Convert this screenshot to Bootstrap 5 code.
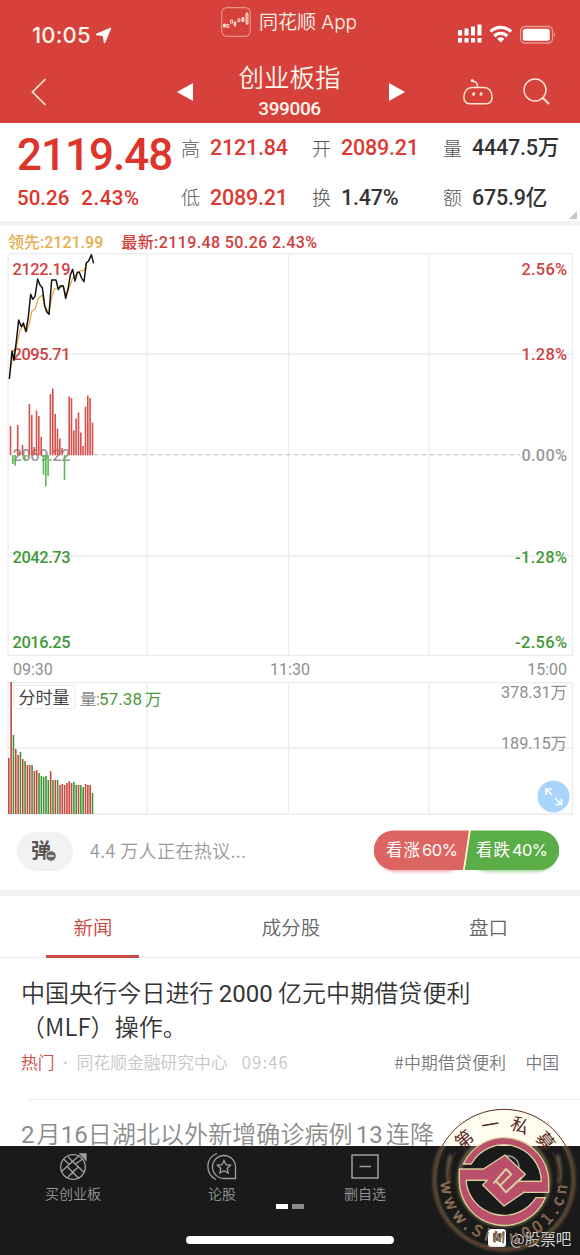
<!DOCTYPE html>
<html lang="zh-CN">
<head>
  <meta charset="UTF-8">
  <meta name="viewport" content="width=device-width, initial-scale=1.0">
  <title>创业板指 399006</title>
  <link href="https://cdn.jsdelivr.net/npm/bootstrap@5.3.3/dist/css/bootstrap.min.css" rel="stylesheet">
  <style>
    :root {
      --rojo: #d6423b;
      --num: Roboto, "Noto Sans CJK SC", sans-serif;
    }
    body {
      width: 580px;
      height: 1255px;
      overflow: hidden;
      background: #fff;
      font-family: var(--num);
      color: #333;
    }
    svg { display: block; flex: none; }
    .num { font-family: var(--num); font-weight: 500; }

    /* header */
    .top-area { height: 123px; background: var(--rojo); color: #fff5ea; }
    .status-row { height: 60px; padding: 7px 24px 0 32px; }
    .clock { font: 500 22px/30px Inter, sans-serif; width: 189px; padding-top: 13px; letter-spacing: .2px; }
    .app-name { font: 350 19px/30px Inter, "Noto Sans CJK SC", sans-serif; padding-top: 1px; }
    .title-row { height: 63px; grid-template-columns: 31px 146px 16px 196px 74px 60px 1fr; }
    .title-block { padding-right: 3px; margin-top: -1px; }
    .title-name { font: 350 25.5px/34px "Noto Sans CJK SC", sans-serif; }
    .title-code { font-size: 19px; line-height: 24px; letter-spacing: -.4px; margin-top: 4px; }

    /* quote */
    .quote { height: 98px; padding-left: 17px; }
    .price-col { width: 164px; color: #dd352a; }
    .price-big { font-size: 44px; line-height: 64px; letter-spacing: -1px; }
    .price-sub { font-size: 20.5px; line-height: 22px; gap: 12px; }
    .price-sub span + span { letter-spacing: .5px; }
    .stats { grid-template-columns: 131px 131px 1fr; grid-template-rows: 50px 49px; }
    .stats span { font-family: "Noto Sans CJK SC", sans-serif; font-size: 19px; font-weight: 300; color: #555; width: 29px; }
    .stats b { font-weight: 500; font-size: 21.5px; letter-spacing: -.2px; white-space: nowrap; padding-top: 1px; }
    .subida { color: #dd3a33; }
    .corner { right: 3px; top: 211px; border: 4px solid; border-color: transparent #c4c4c4 #c4c4c4 transparent; }
    .band { height: 5px; background: #f3f3f3; }

    /* charts */
    .legend-row { height: 27px; padding: 4px 0 0 8px; font-size: 16px; gap: 18px; line-height: 26px; font-weight: 500; }
    .grid-line { stroke: #ececec; stroke-width: 1.3; fill: none; }
    .time-row { height: 26px; padding: 2px 13px 0; font-size: 16px; font-weight: 400; color: #8f8f8f; }
    .chart text { font: 500 16.4px Roboto, "Noto Sans CJK SC", sans-serif; }
    .expand { right: 10px; bottom: 2px; }

    /* comments */
    .talk-row { height: 75px; padding: 0 21px 3px 17px; }
    .danmu { width: 56px; height: 39px; border-radius: 20px; background: #f2f2f2; font: 700 20px/36px "Noto Sans CJK SC", sans-serif; padding-left: 14px; color: #555; }
    .danmu svg { left: 28px; top: 18px; }
    .talk-text { font: 350 18px/26px "Noto Sans CJK SC", sans-serif; color: #999; margin: -2px 0 0 17px; letter-spacing: .4px; }

    /* tabs */
    .tab-row { height: 62px; grid-template-columns: 186px 210px 185px; border-bottom: 1px solid #e8e8e8; font: 350 19.5px/62px "Noto Sans CJK SC", sans-serif; color: #666; }
    .tab-on { color: #c9453f; }
    .tab-on::after { content: ""; position: absolute; left: 46px; width: 93px; height: 3px; bottom: 0; background: #c74c46; }

    /* news */
    .news { height: 188px; overflow: hidden; }
    .news-title { font: 350 24px/34px "Noto Sans CJK SC", sans-serif; color: #333; padding: 17px 21px 0; letter-spacing: .08px; }
    .news-title i { font: 400 24px/30px Roboto, sans-serif; margin: 0 5px; }
    .news-meta { padding: 6px 21px 0; font: 350 16.8px/26px "Noto Sans CJK SC", sans-serif; color: #c6c6c6; }
    .news-dot { width: 22px; text-align: center; font-family: Roboto, sans-serif; font-weight: 700; }
    .news-line { margin: 24px 0 0 27px; border-top: 1px solid #eee; }
    .news-old { color: #8c8c8c; padding-top: 16px; }

    /* footer */
    .foot { height: 109px; background: #1a1a1a; color: #979797; }
    .foot-items { height: 58px; padding-top: 5px; grid-template-columns: 146px 152px 134px 148px; font: 350 14px/22px "Noto Sans CJK SC", sans-serif; }
    .foot-items svg { fill: none; stroke: #a0a0a0; stroke-width: 1.3; margin-bottom: 1px; }
    .pager { gap: 4px; padding-left: 276px; }
    .pager span { width: 12px; height: 5px; background: #8b8b8b; }
    .home-bar { width: 208px; height: 8px; border-radius: 4px; background: #fff; margin: 27px 0 0 186px; }
    .seal { left: 430px; top: 1105px; }
    .seal text { font-family: "Noto Sans CJK SC", sans-serif; }
    .source { left: 488px; top: 1228px; font: 400 15.5px/20px "Noto Sans CJK SC", sans-serif; color: #d4d4d4; gap: 4px; }
    .source-logo { width: 18px; height: 18px; border-radius: 3px; background: #fff; color: #333; font-size: 11px; line-height: 17px; font-weight: 700; }
  </style>
</head>
<body>
  <!-- header -->
  <header class="top-area">
    <div class="status-row d-flex align-items-start">
      <div class="clock d-flex align-items-center gap-1">10:05
        <svg width="17" height="17" viewBox="0 0 17 17"><path d="M1.500 7.500L15.500 1.500L9.500 15.500L8.500 8.500Z" fill="#fff" stroke="#fff" stroke-width="1.500" stroke-linejoin="round"/></svg>
      </div>
      <svg width="30" height="30" viewBox="0 0 30 30" fill="none" stroke="#ffdccb">
        <rect x=".7" y=".7" width="28.6" height="28.6" rx="5" stroke="#ef9085" stroke-width="1.2"/>
        <path d="M2.500 17h1.800v3H2.500zM13 15.500h1.800v3H13zM21 10.500h1.800v4H21z" fill="#ffeadf"/>
        <path d="M5.800 17.500h2v3h-2zM9.500 13h2v3h-2zM17 12h2v2.500h-2zM25 6.500h2v10h-2zM14 14v6M26 5v13"/>
      </svg>
      <div class="app-name ms-2">同花顺 App</div>
      <div class="d-flex align-items-center ms-auto mt-2 pt-1">
        <svg width="98" height="28" viewBox="0 0 98 28" fill="#fff">
          <path d="M0 11h4v5.500H0zM6.500 9.500h4v7h-4zM13 7.500h4v9h-4zM19.500 5.500h4v11h-4zM0 19h4v4.500H0zM6.500 19h4v4.500h-4zM13 19h4v4.500h-4zM19.500 19h4v4.500h-4z"/>
          <g fill="none" stroke="#fff" stroke-width="3.200"><path d="M32.500 12.700a14.500 14.500 0 0 1 20.500 0"/><path d="M36.300 17.100a9 9 0 0 1 12.900 0"/></g>
          <path d="M42.750 23.500l-3.600-3.700a5.200 5.200 0 0 1 7.200 0z"/>
          <rect x="62.600" y="7.500" width="32" height="16.500" rx="4.500" fill="none" stroke="#eb9a8e" stroke-width="1.300"/>
          <rect x="64.800" y="9.700" width="27" height="12" rx="2.500"/>
          <path d="M96 13.500q2.500 2 0 4.500z" fill="#eb9a8e"/>
        </svg>
      </div>
    </div>
    <div class="title-row d-grid align-items-center">
      <span></span>
      <svg width="16" height="28" viewBox="0 0 16 28" fill="none" stroke="#ffe6d6" stroke-width="1.700"><path d="M14.500 1L1.500 14l13 13"/></svg>
      <svg width="16" height="18" viewBox="0 0 16 18"><path d="M0 9L16 0v18z" fill="#fff"/></svg>
      <div class="title-block text-center align-self-start">
        <div class="title-name">创业板指</div>
        <div class="title-code num">399006</div>
      </div>
      <svg width="16" height="18" viewBox="0 0 16 18"><path d="M16 9L0 0v18z" fill="#fff"/></svg>
      <svg width="30" height="27" viewBox="0 0 30 27" fill="none" stroke="#ffe6d6" stroke-width="1.500">
        <path d="M9 9.500h12c4.500 0 7.500 3.500 8 8.500.4 4.500-1.500 7.700-5.500 7.700h-17c-4 0-5.900-3.200-5.500-7.700C1.500 13 4.500 9.500 9 9.500zM14.500 9.500c.3-4-1.500-6-5-6.500"/>
        <circle cx="9.300" cy="2.600" r="1.600" fill="#ffe6d6" stroke="none"/>
        <path d="M11.300 14.500l-1.300 3M18.700 14.500l-1.300 3" stroke-width="2.600"/>
      </svg>
      <svg width="27" height="27" viewBox="0 0 27 27" fill="none" stroke="#ffe6d6" stroke-width="1.400"><circle cx="12" cy="12" r="11"/><path d="M19.500 19.500l6.500 6.500" stroke-width="2"/></svg>
    </div>
  </header>

  <!-- quote -->
  <section class="quote d-flex">
    <div class="price-col num">
      <div class="price-big">2119.48</div>
      <div class="price-sub d-flex"><span>50.26</span><span>2.43%</span></div>
    </div>
    <div class="stats d-grid flex-grow-1 align-items-center">
      <div class="d-flex align-items-center"><span>高</span><b class="subida">2121.84</b></div>
      <div class="d-flex align-items-center"><span>开</span><b class="subida">2089.21</b></div>
      <div class="d-flex align-items-center"><span>量</span><b>4447.5万</b></div>
      <div class="d-flex align-items-center"><span>低</span><b class="subida">2089.21</b></div>
      <div class="d-flex align-items-center"><span>换</span><b>1.47%</b></div>
      <div class="d-flex align-items-center"><span>额</span><b>675.9亿</b></div>
    </div>
    <div class="corner position-absolute"></div>
  </section>
  <div class="band"></div>

  <!-- charts -->
  <div class="legend-row d-flex">
    <span style="color:#e5ad4c">领先:2121.99</span>
    <span style="color:#d23c3a;letter-spacing:.4px">最新:2119.48 50.26 2.43%</span>
  </div>
  <svg class="chart" width="580" height="403" viewBox="0 253 580 403">
    <path class="grid-line" d="M8 253.700H572.500V655.500H8zM8 354H572M8 556H572M147 253V656M288.500 253V656M429 253V656"/>
    <path d="M94 454.700H520" stroke="#c4c4c4" stroke-width="1.200" stroke-dasharray="4.500 3.500"/>
    <g id="price-labels"></g>
    <g id="flow-bars"></g>
    <g fill="none" transform="translate(0 245) scale(.33333)" stroke-linejoin="round">
      <path stroke="#e6a23c" stroke-width="3.600" d="M28 400L36 345L48 312L60 255L70 242L80 258L88 235L96 198L105 192L115 160L127 150L133 180L147 205L155 158L163 133L175 127L190 125L199 152L208 126L218 100L228 88L240 78L252 76L260 54L274 34"/>
      <path stroke="#111" stroke-width="4.400" d="M28 402L36 318L42 346L50 280L56 225L64 245L70 234L78 260L85 215L92 148L98 163L105 154L113 102L120 120L127 128L134 182L140 200L147 208L155 105L168 105L175 134L182 122L190 123L197 160L204 132L211 90L218 73L225 108L232 82L238 82L245 100L252 110L259 54L266 48L274 29L281 55"/>
    </g>
  </svg>
  <div class="time-row d-flex justify-content-between align-items-center"><span>09:30</span><span>11:30</span><span>15:00</span></div>
  <div class="position-relative">
    <svg class="chart" width="580" height="133" viewBox="0 682 580 133">
      <path class="grid-line" d="M8 682.500H572.500V814H8zM8 748H572M147 682V814M288.500 682V814M429 682V814"/>
      <g id="volume-bars"></g>
      <rect x="13.500" y="685.500" width="61.500" height="23" rx="2" fill="#fff" stroke="#ebebeb"/>
      <text x="18.500" y="704" textLength="51" style="font-weight:400;font-size:17px" fill="#444">分时量</text>
      <text x="80" y="705" textLength="20" style="font-weight:400" fill="#888">量:</text>
      <text x="99" y="705" textLength="43" style="font-weight:400;font-size:17px" fill="#4a9a3c">57.38</text>
      <text x="145" y="705" style="font-weight:400" fill="#4a9a3c">万</text>
      <text x="501" y="698" textLength="66" style="font-weight:400" fill="#8f8f8f">378.31万</text>
      <text x="501" y="749" textLength="66" style="font-weight:400" fill="#8f8f8f">189.15万</text>
    </svg>
    <svg class="expand position-absolute" width="33" height="33" viewBox="0 0 33 33">
      <circle cx="16.500" cy="16.500" r="16" fill="#a9d4fb"/>
      <path d="M9 15V9h6M9 9l6 6M18 18l6 6M18.500 24.500h6v-6" fill="none" stroke="#fff" stroke-width="1.700"/>
    </svg>
  </div>

  <!-- comments -->
  <div class="talk-row d-flex align-items-center">
    <div class="danmu position-relative">弹
      <svg class="position-absolute" width="12" height="12" viewBox="0 0 12 12"><circle cx="6" cy="6" r="5.300" fill="#666" stroke="#f2f2f2"/><path d="M3.200 6h5.600" stroke="#fff" stroke-width="1.400"/></svg>
    </div>
    <div class="talk-text">4.4 万人正在热议...</div>
    <svg class="ms-auto mt-1" width="185" height="46" viewBox="0 0 185 46">
      <defs><filter id="soft" x="-5%" y="-10%" width="110%" height="140%"><feGaussianBlur stdDeviation="1.500"/></filter></defs>
      <rect x="3" y="4" width="88" height="38" rx="19" fill="#dc6562" opacity=".5" filter="url(#soft)"/>
      <rect x="94" y="4" width="88" height="38" rx="19" fill="#59ab47" opacity=".5" filter="url(#soft)"/>
      <path d="M19.500 .5H95L89 40H19.500A19.700 19.700 0 0 1 19.500 .5z" fill="#dc6562"/>
      <path d="M96.500 .5H165.500A19.700 19.700 0 0 1 165.500 40H90.500z" fill="#5bad48"/>
      <path d="M96 .5L90 40" stroke="#fff3d4" stroke-width="1.300"/>
      <g fill="#fff" style="font:400 16.500px Inter,'Noto Sans CJK SC',sans-serif">
        <text x="12" y="26" textLength="34">看涨</text><text x="48" y="26" textLength="36">60%</text>
        <text x="102" y="26" textLength="34">看跌</text><text x="138" y="26" textLength="36">40%</text>
      </g>
    </svg>
  </div>
  <div class="band" style="height:6px"></div>

  <!-- tabs -->
  <nav class="tab-row d-grid text-center">
    <div class="tab-on position-relative">新闻</div>
    <div>成分股</div>
    <div>盘口</div>
  </nav>

  <!-- news -->
  <main class="news">
    <div class="news-title">中国央行今日进行<i>2000</i>亿元中期借贷便利<br>（MLF）操作。</div>
    <div class="news-meta d-flex">
      <span style="color:#cf4a44">热门</span><span class="news-dot">·</span><span>同花顺金融研究中心</span>
      <span style="margin-left:14px;letter-spacing:1.2px">09:46</span>
      <span class="ms-auto" style="color:#777;letter-spacing:.3px">#中期借贷便利</span>
      <span style="color:#777;margin-left:19px">中国</span>
    </div>
    <div class="news-line"></div>
    <div class="news-title news-old text-nowrap"><i style="margin:0 2px 0 0">2</i>月<i class="mx-0">16</i><span>日湖北以外新增确诊病例</span><i style="margin:0 3px">13</i>连降</div>
  </main>

  <!-- footer -->
  <footer class="foot">
    <div class="foot-items d-grid">
      <div class="d-flex flex-column align-items-center">
        <svg width="30" height="30" viewBox="0 0 30 30">
          <circle cx="15" cy="16" r="12.300"/>
          <path d="M14.500 10.500l-5.500 5 5.500 5.500 6-5zM6 8.500l5.500 5M14.500 10.500l7-6M20.500 16l5.500 5.500M9 15.500l-5.500 5M14.500 21l6 6M17.500 18.500l-8 8M17.500 13l7-5M14.500 10.500l-4.500-5"/>
          <path d="M22 3h6v6z" fill="#a0a0a0"/>
        </svg>
        <span>买创业板</span>
      </div>
      <div class="d-flex flex-column align-items-center">
        <svg width="30" height="30" viewBox="0 0 30 30">
          <path d="M17 4.500a11.500 11.500 0 1 0 0 23h11.500V16A11.500 11.500 0 0 0 17 4.500zM10 2.500C-2 7-2 23 9 28.500"/>
          <path d="M17 9.500l2 4.200 4.600.6-3.400 3.200.9 4.600-4.100-2.300-4.100 2.300.9-4.600-3.400-3.200 4.600-.6z"/>
        </svg>
        <span>论股</span>
      </div>
      <div class="d-flex flex-column align-items-center">
        <svg width="30" height="30" viewBox="0 0 30 30"><path d="M2 4h26v23H2zM9.500 15.500h11.500" stroke-width="1.500"/></svg>
        <span>删自选</span>
      </div>
      <div class="d-flex flex-column align-items-center">
        <svg width="30" height="46" viewBox="0 0 30 46"><circle cx="17" cy="16" r="11"/><path d="M15 42h6"/></svg>
      </div>
    </div>
    <div class="pager d-flex"><span class="bg-white"></span><span></span></div>
    <div class="home-bar"></div>
  </footer>

  <!-- stamp over the page -->
  <div class="source position-absolute d-flex align-items-center">
    <div class="source-logo text-center">M</div><span>@股票吧</span>
  </div>
  <svg class="seal position-absolute" width="150" height="150" viewBox="0 0 450 450">
    <defs>
      <clipPath id="upper"><path d="M0 0h450v123H0z"/></clipPath>
      <clipPath id="lower"><path d="M0 123h450v327H0z"/></clipPath>
      <filter id="glow" x="-20%" y="-20%" width="140%" height="140%"><feGaussianBlur stdDeviation="4"/></filter>
      <path id="arc-top" d="M72 224a150 150 0 0 1 300 0"/>
      <path id="arc-bottom" d="M32 224a190 190 0 0 0 380 0"/>
    </defs>
    <circle cx="222" cy="224" r="211" fill="#fffdf0" clip-path="url(#upper)"/>
    <g clip-path="url(#lower)">
      <g fill="none" stroke="#8a8058" stroke-width="8" filter="url(#glow)" opacity=".85">
        <circle cx="222" cy="224" r="209"/>
        <path d="M62 150A168 168 0 0 0 57 235M382 150a168 168 0 0 1 5 85"/>
        <circle cx="222" cy="226" r="136"/>
      </g>
    </g>
    <g fill="none" stroke="#5e2a20" stroke-width="3">
      <circle cx="222" cy="224" r="211"/>
      <path d="M76 142A168 168 0 0 0 55 236M368 142a168 168 0 0 1 21 94"/>
    </g>
    <g stroke="#d8cf9c" stroke-width="4" fill="#b94f69" stroke-linejoin="round">
      <path d="M100 177A134 134 0 0 1 356 226V262H282L250 229H334A112 112 0 0 0 124 177z"/>
      <path d="M346 278A134 134 0 0 1 88 226V192H160L194 226H108A114 114 0 0 0 318 278z"/>
      <path d="M225 150L286 208L266 229L282 262L222 303L158 240L172 226L160 192z" stroke="none"/>
      <path d="M334 229H266L286 208L225 150L160 192M108 226H172L158 240L222 303L282 262" fill="none"/>
      <path d="M190 236L228 192L244 208L212 240M198 228L228 262L274 218" fill="none" stroke-width="6"/>
    </g>
    <text fill="#5a281e" font-size="54" letter-spacing="26"><textPath href="#arc-top" startOffset="90">第一私募</textPath></text>
    <text fill="#6d4037" stroke="#ad966c" stroke-width="1.500" font-size="47"><textPath href="#arc-bottom" startOffset="8" textLength="572">www.SiMu001.cn</textPath></text>
  </svg>

  <script src="https://cdn.jsdelivr.net/npm/bootstrap@5.3.3/dist/js/bootstrap.bundle.min.js"></script>
  <script>
    const svgNs = 'http://www.w3.org/2000/svg';

    // baseline y, price, percent, colour
    const labels = [
      [275, '2122.19', '2.56%', '#cf4242'],
      [360.4, '2095.71', '1.28%', '#cf4242'],
      [461, '2069.22', '0.00%', '#999'],
      [563, '2042.73', '-1.28%', '#3f9936'],
      [648, '2016.25', '-2.56%', '#3f9936']
    ];

    // x, end of the bar; below 454.7 is outflow
    const flow = [
      [10.5, 426], [12.8, 464.5], [15.2, 466], [17.7, 425], [20, 452], [22.5, 445], [24.8, 461], [27, 457],
      [29.4, 404], [31.8, 415], [34.1, 447], [36.5, 410.5], [38.8, 416], [41.2, 437], [43.5, 475], [45.8, 486.5],
      [48.1, 476.5], [50.4, 394], [52.8, 388.5], [55.2, 414], [57.5, 428.5], [59.8, 438.5], [62.1, 448], [64.5, 480.5],
      [69.2, 396.5], [71.5, 398], [73.8, 430.5], [76.1, 418.5], [78.5, 412.5], [80.8, 432.5], [83.1, 446],
      [85.5, 406.5], [87.8, 395.5], [90.1, 398], [92.5, 422.5]
    ];

    // bar heights and r / g
    const volume = '56r 132r 79g 65r 59r 62g 55r 53g 49r 49r 49g 43r 44r 41g 38g 37g 38g 34g 43r 34g 34r 34g 29r 30r 29r 31r 33r 31r 32g 29g 29r 29g 27g 30r 29r 29r 21g'.split(' ');

    function afegir(id, tag, attrs, text) {
      const el = document.createElementNS(svgNs, tag);
      for (const k in attrs) el.setAttribute(k, attrs[k]);
      if (text) el.textContent = text;
      document.getElementById(id).appendChild(el);
    }

    labels.forEach(([y, price, pct, fill]) => {
      afegir('price-labels', 'text', { x: 12.5, y, fill, textLength: 58 }, price);
      afegir('price-labels', 'text', { x: 567, y, fill, 'text-anchor': 'end', textLength: pct[0] === '-' ? 52 : 45.5 }, pct);
    });

    flow.forEach(([x, y]) => {
      const up = y < 454.7;
      afegir('flow-bars', 'rect', {
        x: x - .8, width: 1.6, y: up ? y : 455, height: Math.abs(455.3 - y), fill: up ? '#d94f4c' : '#5cb850'
      });
    });

    volume.forEach((v, i) => {
      const h = parseInt(v);
      afegir('volume-bars', 'rect', {
        x: 8 + i * 2.325, width: 1.6, y: 814 - h, height: h, fill: v.endsWith('r') ? '#c8483f' : '#3f9636'
      });
    });
  </script>
</body>
</html>
